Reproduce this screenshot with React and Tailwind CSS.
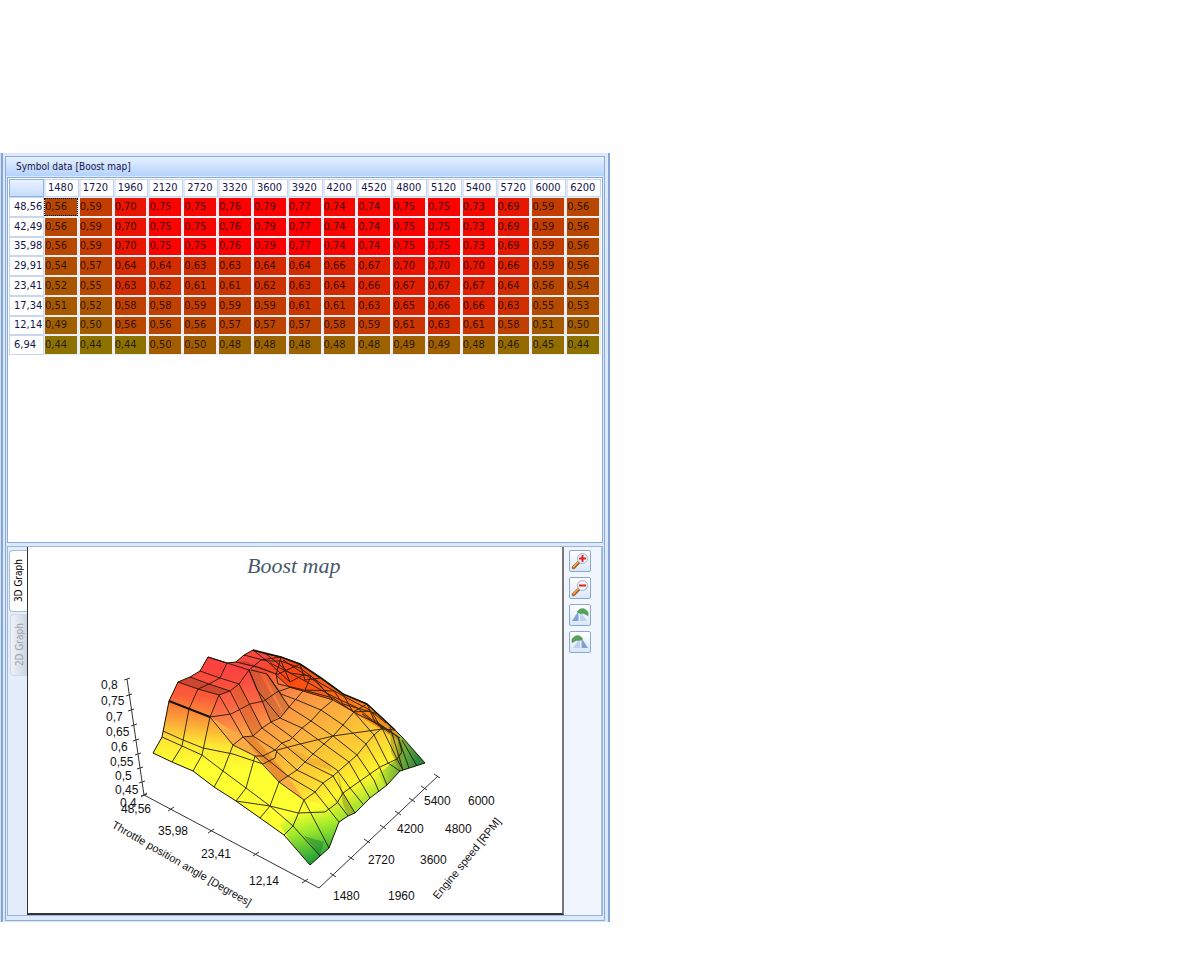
import { useState } from 'react';

const rpm = [1480, 1720, 1960, 2120, 2720, 3320, 3600, 3920, 4200, 4520, 4800, 5120, 5400, 5720, 6000, 6200];

const rows = [
  { throttle: '48,56', values: [56, 59, 70, 75, 75, 76, 79, 77, 74, 74, 75, 75, 73, 69, 59, 56] },
  { throttle: '42,49', values: [56, 59, 70, 75, 75, 76, 79, 77, 74, 74, 75, 75, 73, 69, 59, 56] },
  { throttle: '35,98', values: [56, 59, 70, 75, 75, 76, 79, 77, 74, 74, 75, 75, 73, 69, 59, 56] },
  { throttle: '29,91', values: [54, 57, 64, 64, 63, 63, 64, 64, 66, 67, 70, 70, 70, 66, 59, 56] },
  { throttle: '23,41', values: [52, 55, 63, 62, 61, 61, 62, 63, 64, 66, 67, 67, 67, 64, 56, 54] },
  { throttle: '17,34', values: [51, 52, 58, 58, 59, 59, 59, 61, 61, 63, 65, 66, 66, 63, 55, 53] },
  { throttle: '12,14', values: [49, 50, 56, 56, 56, 57, 57, 57, 58, 59, 61, 63, 61, 58, 51, 50] },
  { throttle: '6,94', values: [44, 44, 44, 50, 50, 48, 48, 48, 48, 48, 49, 49, 48, 46, 45, 44] },
];

// low boost = olive, high boost = red
function heat(v) {
  const t = Math.min(1, Math.max(0, (v - 44) / 32));
  return `rgb(${Math.round(142 + 113 * t)}, ${Math.round(114 * (1 - t))}, 0)`;
}

const outline =
  '153,753 162,737 169,701 178,682 190,677 200,671 208,657 227,663 236,662 244,655 253,650 266,654 281,657 300,664 321,678 343,694 367,704 378,714 395,730 403,738 425,763 400,771 387,785 370,798 355,813 348,816 339,822 329,848 310,865 284,835 260,818 236,801 214,787 193,771 172,762';

// lines of constant throttle angle
const throttleLines = [
  '172,762 182,746 189,709 198,689 209,684 220,678 227,663',
  '193,771 202,755 210,717 219,695 230,691 239,684 249,670 261,660 281,657',
  '214,787 223,771 233,745 243,737 253,736 262,728 271,722 280,718 289,707 303,691',
  '236,801 246,788 255,756 263,756 275,750 282,743 290,740 302,728 311,721 321,710 333,700',
  '260,818 270,806 279,782 288,776 297,770 305,762 313,754 324,744 333,736 343,725 354,712',
  '284,835 293,826 304,800 315,792 323,783 333,776 349,762 357,755 366,744 374,735 382,728',
  '236,801 270,806 298,813 325,812 337,803 343,793 360,781 380,767 397,759 402,752 398,737',
];

// lines of constant engine speed
const speedLines = [
  '162,737 182,746 202,755 223,771 246,788 270,806 293,826 320,856',
  '169,701 189,709 210,717 233,745 255,756 279,782 304,800 329,848',
  '178,682 198,689 219,695 243,737 263,756 288,776 315,792 339,822',
  '190,677 209,684 230,691 253,736 275,750 297,770 323,783 348,816',
  '200,671 220,678 239,684 262,728 282,743 305,762 333,776 343,793 355,813',
  '208,657 227,663 249,670 271,722 293,738 313,754 337,770 350,788 363,804',
  '249,670 257,690 280,718 302,728 324,744 349,762 360,781 370,798',
  '251,670 267,674 289,707 311,721 333,736 357,755 374,780 379,792',
  '267,674 281,694 297,700 321,710 343,725 366,744 379,766 387,785',
  '276,675 289,687 303,691 333,700 354,712 374,735 388,763 400,771',
  '362,714 382,728 397,759 403,770',
  '236,662 257,667 276,674 278,684 300,689 333,698 355,713 380,725 400,738',
  '244,655 267,661 281,661 300,668 320,683 345,697 368,709 386,723',
  '270,663 290,673 307,682 321,690 338,699 356,707 371,719 390,733',
  '398,737 409,768',
  '402,740 417,766',
  '390,727 403,770',
];

const creases = [
  '163,731 183,740 203,748 233,754 263,764 275,758 277,750 300,744 333,736 382,729',
  '210,717 231,714 250,704 264,701 277,692 291,687',
  '253,650 267,661 290,682',
  '266,654 290,673 311,676 333,700',
  '281,657 276,675 300,664',
  '300,664 305,680 321,678 343,694 353,712 367,704',
  '281,661 290,682 305,674',
  '311,676 305,690 334,691 343,704 378,714',
  '353,712 371,711 382,729 395,730',
  '367,704 374,720 398,737',
  '283,660 318,683 333,700',
];

const shades = [
  { points: '249,670 257,669 283,714 271,722', fill: '#b8532c' },
  { points: '265,674 270,676 290,707 284,715', fill: '#c0602c' },
  { points: '236,662 276,674 267,669 244,661', fill: '#a83028' },
  { points: '178,682 190,677 209,684 198,689', fill: '#a63b25' },
  { points: '198,689 209,684 230,691 219,695', fill: '#a63b25' },
  { points: '233,691 239,684 262,728 253,736', fill: '#d26025' },
  { points: '243,737 253,736 288,776 279,782', fill: '#d77020' },
  { points: '285,745 310,758 326,760 333,771 305,762', fill: '#e7a030' },
  { points: '337,770 343,793 355,813 348,816 343,804', fill: '#8a8b25' },
  { points: '304,836 324,842 320,856', fill: '#208030' },
  { points: '390,729 403,742 400,771 391,752', fill: '#8a8322' },
];

const speedTicks = [[333, 875], [351, 858], [367, 841], [383, 827], [398, 813], [412, 800], [424, 788], [437, 776]];
const throttleTicks = [[144, 795], [171, 809], [211, 831], [256, 854], [305, 881]];
const boostTicks = [[127, 679], [129, 695], [131, 710], [134, 725], [136, 740], [138, 754], [140, 768], [142, 782], [144, 795]];

const boostLabels = [['0,8', 101, 689], ['0,75', 101, 705], ['0,7', 106, 721], ['0,65', 106, 736], ['0,6', 111, 751], ['0,55', 110, 766], ['0,5', 115, 780], ['0,45', 115, 794], ['0,4', 120, 807]];
const throttleLabels = [['48,56', 121, 813], ['35,98', 158, 835], ['23,41', 201, 858], ['12,14', 249, 885]];
const speedLabels = [['1480', 333, 900], ['1960', 388, 900], ['2720', 368, 864], ['3600', 420, 864], ['4200', 397, 833], ['4800', 445, 833], ['5400', 424, 805], ['6000', 468, 805]];

function Surface() {
  return (
    <svg viewBox="28 547 534 366" className="block w-full" role="img" aria-label="Boost map surface">
      <defs>
        <clipPath id="surface"><polygon points={outline} /></clipPath>
        <linearGradient id="wall" gradientUnits="userSpaceOnUse" x1="205" y1="667" x2="195" y2="765">
          <stop offset="0" stopColor="#fb4240" />
          <stop offset="0.3" stopColor="#fb5a38" />
          <stop offset="0.55" stopColor="#fb9e38" />
          <stop offset="0.78" stopColor="#fde534" />
          <stop offset="1" stopColor="#feff30" />
        </linearGradient>
        <linearGradient id="fold" gradientUnits="userSpaceOnUse" x1="240" y1="675" x2="252" y2="738">
          <stop offset="0" stopColor="#fb4542" />
          <stop offset="0.45" stopColor="#fb6844" />
          <stop offset="1" stopColor="#fba944" />
        </linearGradient>
        <linearGradient id="slope" gradientUnits="userSpaceOnUse" x1="265" y1="675" x2="350" y2="818">
          <stop offset="0" stopColor="#f85a38" />
          <stop offset="0.18" stopColor="#fa8c46" />
          <stop offset="0.42" stopColor="#fbb03d" />
          <stop offset="0.66" stopColor="#fdd033" />
          <stop offset="0.84" stopColor="#fff52d" />
          <stop offset="1" stopColor="#8ee030" />
        </linearGradient>
        <linearGradient id="back" gradientUnits="userSpaceOnUse" x1="260" y1="655" x2="410" y2="745">
          <stop offset="0" stopColor="#fa4a40" />
          <stop offset="0.2" stopColor="#fb4510" />
          <stop offset="0.7" stopColor="#fb8516" />
          <stop offset="1" stopColor="#cfa020" />
        </linearGradient>
        <linearGradient id="front" gradientUnits="userSpaceOnUse" x1="298" y1="812" x2="312" y2="862">
          <stop offset="0" stopColor="#fdff30" />
          <stop offset="0.4" stopColor="#9ee82c" />
          <stop offset="1" stopColor="#1fa03c" />
        </linearGradient>
        <linearGradient id="tip" gradientUnits="userSpaceOnUse" x1="385" y1="755" x2="418" y2="762">
          <stop offset="0" stopColor="#c5e82c" />
          <stop offset="0.5" stopColor="#72ae37" />
          <stop offset="1" stopColor="#2d8640" />
        </linearGradient>
      </defs>

      <text x="247" y="573" fontSize="22" fontStyle="italic" fill="#46586a" fontFamily="Liberation Serif, serif">Boost map</text>

      <g clipPath="url(#surface)">
        <rect x="150" y="645" width="280" height="225" fill="url(#slope)" />
        <polygon points="150,760 150,640 258,640 249,670 239,684 210,717 233,745 255,756 279,782 304,800 293,826 284,840" fill="url(#wall)" />
        <polygon points="219,695 230,691 239,684 249,670 271,722 262,728 253,736 243,737 233,745 210,717" fill="url(#fold)" />
        <polygon points="210,717 243,737 288,776 304,800 279,782 255,756 233,745" fill="#fbab43" />
        <polygon points="236,662 244,655 253,645 305,660 347,690 372,702 406,736 398,740 353,712 333,700 290,688 276,674 249,670" fill="url(#back)" />
        <polygon points="280,825 304,800 325,805 342,820 330,855 310,870" fill="url(#front)" />
        <polygon points="398,732 430,764 398,775 386,787 378,774 397,759" fill="url(#tip)" />
        {shades.map((s) => (
          <polygon key={s.points} points={s.points} fill={s.fill} opacity="0.5" />
        ))}
      </g>

      <g fill="none" stroke="#191405" strokeLinejoin="round">
        <polygon points={outline} strokeWidth="1" />
        <g strokeWidth="1" opacity="0.85">
          {[...throttleLines, ...speedLines, ...creases].map((points) => (
            <polyline key={points} points={points} />
          ))}
        </g>
        <polyline points="253,650 281,657 300,664 321,678 343,694 367,704 395,730" strokeWidth="1.6" />
        <polyline points="169,701 210,717" strokeWidth="2" />
      </g>

      {/* axes */}
      <g fill="none" stroke="#333" strokeWidth="1">
        <polyline points="127,679 144,795 319,888 438,776" />
        {speedTicks.map(([x, y]) => <path key={x} d={`M${x - 3} ${y - 2}l6 4`} />)}
        {throttleTicks.map(([x, y]) => <path key={x} d={`M${x - 3} ${y + 2}l6 -4`} />)}
        {boostTicks.map(([x, y]) => <path key={x} d={`M${x - 3} ${y + 1}l6 -2`} />)}
      </g>

      <g fontSize="12" fill="#111" fontFamily="Liberation Sans, sans-serif">
        {[...boostLabels, ...throttleLabels, ...speedLabels].map(([label, x, y]) => (
          <text key={label} x={x} y={y}>{label}</text>
        ))}
        <text transform="translate(111 827) rotate(30)" fontSize="11">Throttle position angle [Degrees]</text>
        <text transform="translate(438 900) rotate(-51)" fontSize="11">Engine speed [RPM]</text>
      </g>
    </svg>
  );
}

function Magnifier({ plus }) {
  return (
    <svg viewBox="0 0 18 18" className="size-[18px]" aria-hidden="true">
      <path d="M2.5 15.5L8 10" stroke="#a95f22" strokeWidth="3.4" strokeLinecap="round" />
      <path d="M2.5 14.7L7.4 9.8" stroke="#f3a957" strokeWidth="1.5" strokeLinecap="round" />
      <circle cx="11.5" cy="6.5" r="5" fill="#eef6ff" stroke="#9bb3cf" />
      <path d={plus ? 'M8 6.5h7M11.5 3v7' : 'M8 6.5h7'} stroke="#e0241c" strokeWidth="2" />
    </svg>
  );
}

function Rotate({ flip }) {
  return (
    <svg viewBox="0 0 18 18" className={flip ? 'size-[18px] -scale-x-100' : 'size-[18px]'} aria-hidden="true">
      <path d="M1 15L7.5 5v10z" fill="#7ea2d8" />
      <path d="M9 5l7 10H9z" fill="#bdd2f2" />
      <path d="M6.5 6C8 2 14 1 17 6.5V9.5L14 8C12 6.5 9 7.5 8 7z" fill="#57a657" stroke="#387e46" strokeWidth="0.6" />
    </svg>
  );
}

const tools = [
  { label: 'Zoom in', icon: <Magnifier plus /> },
  { label: 'Zoom out', icon: <Magnifier /> },
  { label: 'Rotate left', icon: <Rotate /> },
  { label: 'Rotate right', icon: <Rotate flip /> },
];

export default function App() {
  const [tab, setTab] = useState('3D Graph');

  return (
    <div className="min-h-screen bg-[#fefefe] pt-[153px] font-['DejaVu_Sans_Condensed','Noto_Sans',sans-serif] text-[11px] text-[#15154a]">
      <div className="w-full max-w-[610px] border-l border-[#cfe0f8]">
        <div className="border-x-2 border-[#86a5d0] bg-[#dce9fb] pt-[3px] pr-[3px] pb-px pl-[2px]">
          <section className="border border-[#8aabdc]">
            <h1 className="h-[19px] bg-linear-to-b from-[#e6f0ff] to-[#b4d2fb] pl-[10px] text-[10px] leading-5">Symbol data [Boost map]</h1>

            <div className="mx-px mt-px h-[366px] overflow-hidden border border-[#87a9dc] bg-white px-px pt-px">
              <table className="h-[176px] w-full max-w-[592px] table-fixed border-separate border-spacing-0">
                <thead>
                  <tr className="h-[18px]">
                    <th className="w-[35px] border border-[#8fb2e4] bg-linear-to-b from-[#e9f2ff] to-[#c6dcfb]" aria-label="Throttle" />
                    {rpm.map((r) => (
                      <th key={r} scope="col" className="border border-l-2 border-[#c4d6f0] border-l-[#dce8f8] bg-white p-0 pl-[2px] text-left font-normal leading-4">{r}</th>
                    ))}
                  </tr>
                </thead>
                <tbody>
                  {rows.map((row, i) => (
                    <tr key={row.throttle}>
                      <th scope="row" className="border border-[#c9d7ea] bg-white p-0 pl-[4px] text-left font-normal leading-4">{row.throttle}</th>
                      {row.values.map((v, j) => (
                        <td key={rpm[j]} className="border-y border-r-2 border-l border-[#e9eef6] p-0 leading-4 text-black/75" style={{ backgroundColor: heat(v) }}>
                          <div className={i === 0 && j === 0 ? 'outline-1 outline-dotted outline-black' : ''}>0,{v}</div>
                        </td>
                      ))}
                    </tr>
                  ))}
                </tbody>
              </table>
            </div>

            <div className="mx-px mt-[3px] mb-1 flex border border-[#9bb5df] bg-[#f1f6fe]">
              <div role="tablist" className="flex w-[19px] shrink-0 flex-col items-end gap-[2px] bg-[#e3edfc] pt-[3px]">
                {['3D Graph', '2D Graph'].map((name) => (
                  <button
                    key={name}
                    role="tab"
                    aria-selected={tab === name}
                    onClick={() => setTab(name)}
                    className={
                      tab === name
                        ? 'flex h-[62px] w-[18px] items-center justify-center rounded-l-sm border border-r-0 border-[#a9bddb] bg-white text-[10px] text-black'
                        : 'flex h-[62px] w-[17px] items-center justify-center rounded-l-sm border border-r-0 border-[#cfd8e6] bg-linear-to-r from-[#eef2f8] to-[#cdd5e1] text-[10px] text-[#9aa1ad]'
                    }
                  >
                    <span className="rotate-180 [writing-mode:vertical-rl]">{name}</span>
                  </button>
                ))}
              </div>
              <div className="min-w-0 flex-1 border-r-2 border-b-2 border-l border-[#333] border-r-[#777] bg-white">
                <Surface />
              </div>
              <div className="flex w-[38px] shrink-0 flex-col gap-[5px] border-r border-[#a9c0e6] pt-[3px] pl-[5px]">
                {tools.map((tool) => (
                  <button key={tool.label} aria-label={tool.label} className="flex size-[22px] items-center justify-center rounded-xs border border-[#8aa7d3] bg-linear-to-b from-white to-[#dbe7f7]">
                    {tool.icon}
                  </button>
                ))}
              </div>
            </div>
          </section>
        </div>
      </div>
    </div>
  );
}
